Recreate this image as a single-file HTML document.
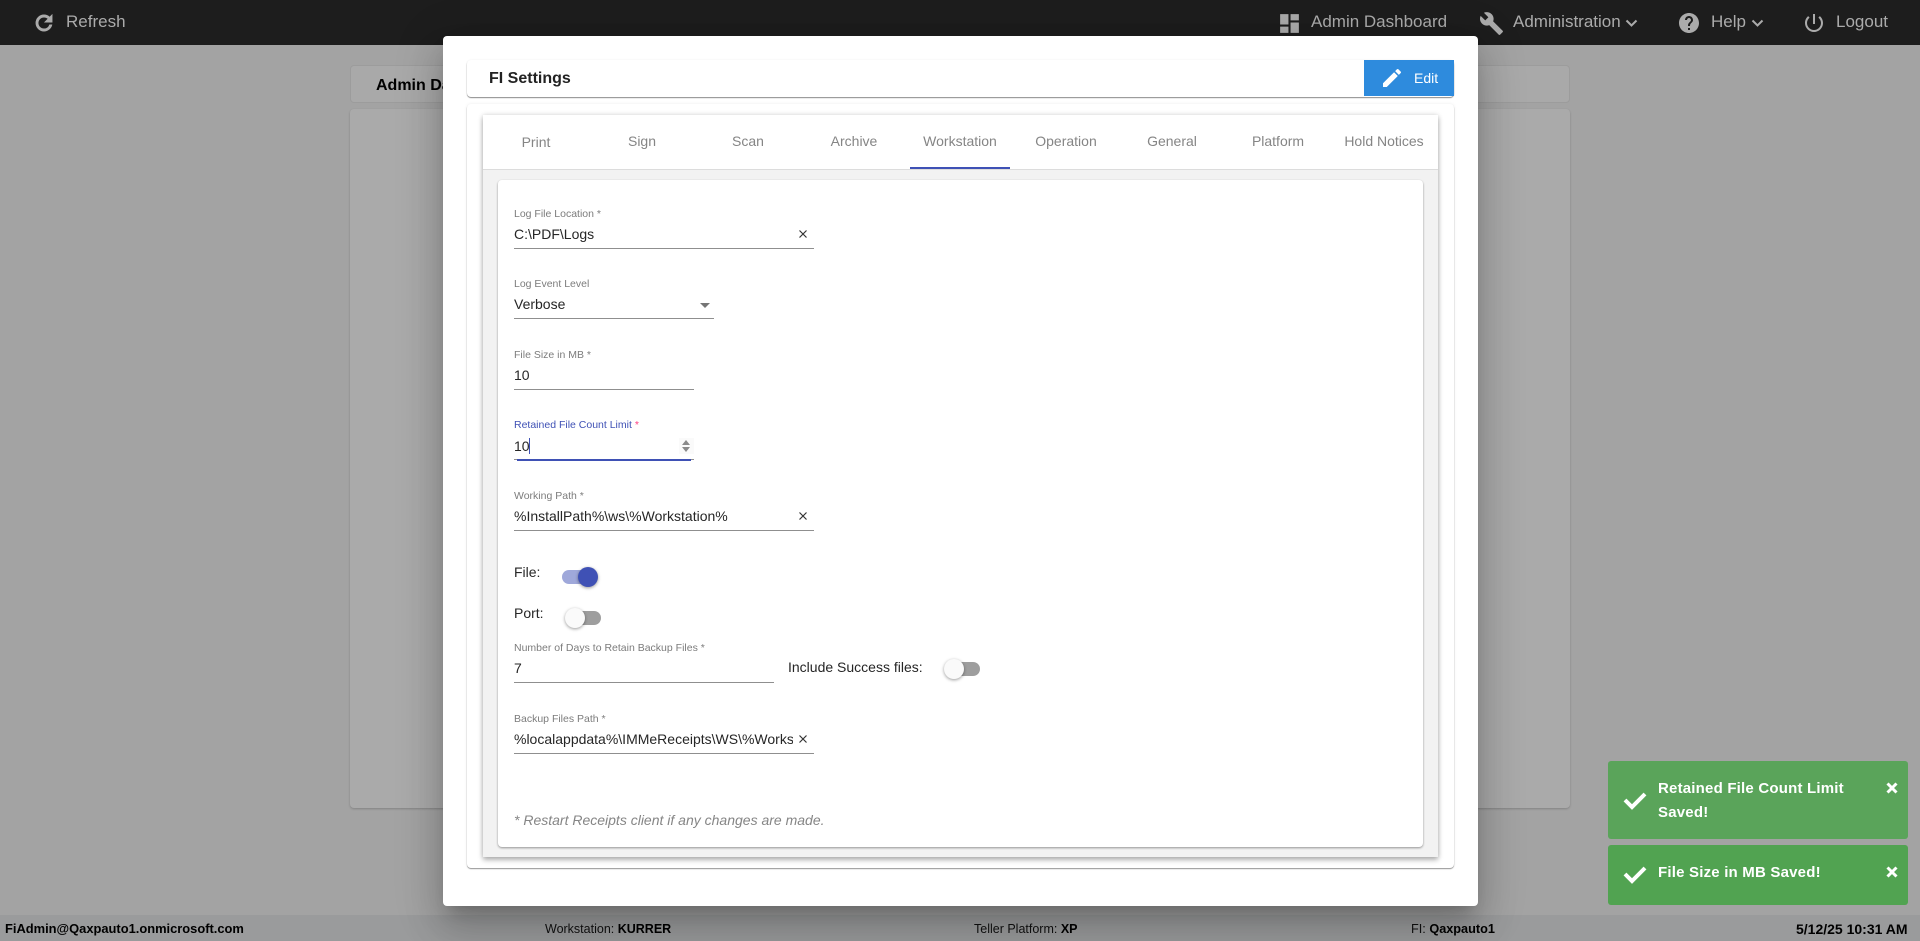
<!DOCTYPE html>
<html><head><meta charset="utf-8"><title>FI Settings</title>
<style>
html,body{margin:0;padding:0;width:1920px;height:941px;overflow:hidden;background:#a3a3a3;font-family:"Liberation Sans",Arial,sans-serif}
*{box-sizing:border-box}
.a{position:absolute}
.t{position:absolute;white-space:nowrap;height:20px;line-height:20px}
.top{color:#ababab;font-size:17px}
.tab{position:absolute;top:131px;width:106px;text-align:center;font-size:14px;line-height:20px;color:#858585}
.lab{font-size:10.5px;color:#7c7c7c;left:514px}
.val{font-size:14px;color:#262626;left:514px}
.ul{position:absolute;height:1px;background:#8f8f8f;left:514px}
.x{position:absolute;width:10px;height:10px}
.foot{font-size:12.5px;color:#111;top:919px}
.foot b{color:#000}
.toast{position:absolute;left:1608px;width:300px;border-radius:3px}
.tt{position:absolute;left:1658px;color:#fff;font-weight:bold;font-size:15px;line-height:24px;white-space:nowrap;letter-spacing:.2px}
</style></head><body>
<!-- page behind -->
<div class="a" style="left:0;top:0;width:1920px;height:45px;background:#1d1d1d"></div>
<div class="a" style="left:0;top:915px;width:1920px;height:26px;background:#9a9b9c"></div>
<div class="a" style="left:350px;top:65px;width:1220px;height:38px;background:#a9a9a9;border:1px solid #9c9c9c;border-radius:4px"></div>
<div class="t" style="left:376px;top:76px;font-size:16px;font-weight:bold;color:#000">Admin Dashboard</div>
<div class="a" style="left:350px;top:109px;width:1220px;height:699px;background:#aaa;border-radius:4px;box-shadow:0 1px 2px rgba(0,0,0,.2)"></div>

<!-- top bar -->
<svg class="a" style="left:32px;top:11px" width="24" height="24" viewBox="0 0 24 24" fill="#ababab" stroke="#ababab" stroke-width=".9"><path d="M17.65 6.35C16.2 4.9 14.21 4 12 4c-4.42 0-7.99 3.58-7.99 8s3.57 8 7.99 8c3.73 0 6.84-2.55 7.73-6h-2.08c-.82 2.33-3.04 4-5.65 4-3.31 0-6-2.69-6-6s2.69-6 6-6c1.66 0 3.14.69 4.22 1.78L13 11h7V4l-2.35 2.35z"/></svg>
<div class="t top" style="left:66px;top:12px">Refresh</div>
<svg class="a" style="left:1277px;top:11px" width="25" height="25" viewBox="0 0 24 24" fill="#ababab"><path d="M3 13h8V3H3v10zm0 8h8v-6H3v6zm10 0h8V11h-8v10zm0-18v6h8V3h-8z"/></svg>
<div class="t top" style="left:1311px;top:12px">Admin Dashboard</div>
<svg class="a" style="left:1479px;top:11px" width="25" height="25" viewBox="0 0 24 24" fill="#ababab"><path d="M22.7 19l-9.1-9.1c.9-2.3.4-5-1.5-6.9-2-2-5-2.4-7.4-1.3L9 6 6 9 1.6 4.7C.4 7.1.9 10.1 2.9 12.1c1.9 1.9 4.6 2.4 6.9 1.5l9.1 9.1c.4.4 1 .4 1.4 0l2.3-2.3c.5-.4.5-1.1.1-1.4z"/></svg>
<div class="t top" style="left:1513px;top:12px">Administration</div>
<svg class="a" style="left:1625px;top:18px" width="13" height="10" viewBox="0 0 13 10" fill="none" stroke="#ababab" stroke-width="2"><path d="M1.5 2.5L6.5 7.5L11.5 2.5"/></svg>
<svg class="a" style="left:1677px;top:11px" width="24" height="24" viewBox="0 0 24 24" fill="#ababab"><path d="M12 2C6.48 2 2 6.48 2 12s4.48 10 10 10 10-4.48 10-10S17.52 2 12 2zm1 17h-2v-2h2v2zm2.07-7.75l-.9.92C13.45 12.9 13 13.5 13 15h-2v-.5c0-1.1.45-2.1 1.17-2.83l1.24-1.26c.37-.36.59-.86.59-1.41 0-1.1-.9-2-2-2s-2 .9-2 2H8c0-2.21 1.79-4 4-4s4 1.79 4 4c0 .88-.36 1.68-.93 2.25z"/></svg>
<div class="t top" style="left:1711px;top:12px">Help</div>
<svg class="a" style="left:1751px;top:18px" width="13" height="10" viewBox="0 0 13 10" fill="none" stroke="#ababab" stroke-width="2"><path d="M1.5 2.5L6.5 7.5L11.5 2.5"/></svg>
<svg class="a" style="left:1802px;top:11px" width="24" height="24" viewBox="0 0 24 24" fill="#ababab"><path d="M13 3h-2v10h2V3zm4.83 2.17l-1.42 1.42C17.99 7.86 19 9.81 19 12c0 3.87-3.13 7-7 7s-7-3.13-7-7c0-2.19 1.01-4.14 2.58-5.42L6.17 5.17C4.23 6.82 3 9.26 3 12c0 4.97 4.03 9 9 9s9-4.03 9-9c0-2.74-1.23-5.18-3.17-6.83z"/></svg>
<div class="t top" style="left:1836px;top:12px">Logout</div>

<!-- footer -->
<div class="t foot" style="left:5px;font-size:12.9px;font-weight:bold;color:#000">FiAdmin@Qaxpauto1.onmicrosoft.com</div>
<div class="t foot" style="left:545px">Workstation: <b>KURRER</b></div>
<div class="t foot" style="left:974px">Teller Platform: <b>XP</b></div>
<div class="t foot" style="left:1411px;font-size:12.7px">FI: <b>Qaxpauto1</b></div>
<div class="t foot" style="left:1796px;font-size:14px;font-weight:bold;color:#000">5/12/25 10:31 AM</div>

<!-- modal -->
<div class="a" style="left:443px;top:36px;width:1035px;height:870px;background:#fff;border-radius:4px;box-shadow:0 11px 15px -7px rgba(0,0,0,.2),0 24px 38px 3px rgba(0,0,0,.14),0 9px 46px 8px rgba(0,0,0,.12)"></div>
<div class="a" style="left:467px;top:60px;width:987px;height:37px;background:#fff;border-radius:4px;box-shadow:0 1px 1px rgba(0,0,0,.45),0 0 2px rgba(0,0,0,.06)"></div>
<div class="t" style="left:489px;top:69px;font-size:16px;font-weight:bold;color:#222">FI Settings</div>
<div class="a" style="left:1364px;top:60px;width:90px;height:36px;background:#2e8bdd"></div>
<svg class="a" style="left:1380px;top:66px" width="24" height="24" viewBox="0 0 24 24" fill="#fff"><path d="M3 17.25V21h3.75L17.81 9.94l-3.75-3.75L3 17.25zM20.71 7.04c.39-.39.39-1.02 0-1.41l-2.34-2.34c-.39-.39-1.02-.39-1.41 0l-1.83 1.83 3.75 3.75 1.83-1.83z"/></svg>
<div class="t" style="left:1414px;top:68px;font-size:14px;color:#fff">Edit</div>

<div class="a" style="left:467px;top:104px;width:987px;height:764px;background:#fff;border-radius:4px;box-shadow:0 1px 1px rgba(0,0,0,.4),0 0 3px rgba(0,0,0,.08)"></div>
<div class="a" style="left:483px;top:115px;width:955px;height:742px;background:#f2f2f2;box-shadow:0 3px 5px rgba(0,0,0,.28),0 0 5px rgba(0,0,0,.15)"></div>
<div class="a" style="left:483px;top:115px;width:955px;height:55px;background:#fff;border-bottom:1px solid #dcdcdc"></div>
<div class="tab" style="left:483px;top:132px">Print</div>
<div class="tab" style="left:589px">Sign</div>
<div class="tab" style="left:695px">Scan</div>
<div class="tab" style="left:801px">Archive</div>
<div class="tab" style="left:907px">Workstation</div>
<div class="tab" style="left:1013px">Operation</div>
<div class="tab" style="left:1119px">General</div>
<div class="tab" style="left:1225px">Platform</div>
<div class="tab" style="left:1331px">Hold Notices</div>
<div class="a" style="left:910px;top:167px;width:100px;height:2px;background:#3f51b5"></div>

<div class="a" style="left:498px;top:180px;width:925px;height:667px;background:#fff;border-radius:4px;box-shadow:0 1px 2px rgba(0,0,0,.4)"></div>

<!-- fields -->
<div class="t lab" style="top:204px">Log File Location *</div>
<div class="t val" style="top:224px">C:\PDF\Logs</div>
<svg class="x" style="left:798px;top:229px" viewBox="0 0 10 10" stroke="#333" stroke-width="1.2"><path d="M1.5 1.5L8.5 8.5M8.5 1.5L1.5 8.5"/></svg>
<div class="ul" style="top:248px;width:300px"></div>

<div class="t lab" style="top:274px">Log Event Level</div>
<div class="t val" style="top:294px">Verbose</div>
<div class="a" style="left:700px;top:303px;width:0;height:0;border-left:5px solid transparent;border-right:5px solid transparent;border-top:5px solid #757575"></div>
<div class="ul" style="top:318px;width:200px"></div>

<div class="t lab" style="top:345px">File Size in MB *</div>
<div class="t val" style="top:365px">10</div>
<div class="ul" style="top:389px;width:180px"></div>

<div class="t lab" style="top:415px;color:#3f51b5">Retained File Count Limit <span style="color:#ff4081">*</span></div>
<div class="t val" style="top:436px">10</div>
<div class="a" style="left:529px;top:438px;width:1px;height:16px;background:#3f51b5"></div>
<div class="a" style="left:679px;top:438px;width:15px;height:16px;background:#fafafa"></div>
<div class="a" style="left:682px;top:440px;width:0;height:0;border-left:4.5px solid transparent;border-right:4.5px solid transparent;border-bottom:5px solid #8a8a8a"></div>
<div class="a" style="left:682px;top:447px;width:0;height:0;border-left:4.5px solid transparent;border-right:4.5px solid transparent;border-top:5px solid #8a8a8a"></div>
<div class="ul" style="top:459px;width:180px"></div>
<div class="a" style="left:517px;top:459px;width:174px;height:2px;background:#3f51b5"></div>

<div class="t lab" style="top:486px">Working Path *</div>
<div class="t val" style="top:506px">%InstallPath%\ws\%Workstation%</div>
<svg class="x" style="left:798px;top:511px" viewBox="0 0 10 10" stroke="#333" stroke-width="1.2"><path d="M1.5 1.5L8.5 8.5M8.5 1.5L1.5 8.5"/></svg>
<div class="ul" style="top:530px;width:300px"></div>

<div class="t val" style="top:562px">File:</div>
<div class="a" style="left:562px;top:570px;width:34px;height:14px;border-radius:7px;background:#9fa8da"></div>
<div class="a" style="left:578px;top:567px;width:20px;height:20px;border-radius:50%;background:#3f51b5;box-shadow:0 1px 3px rgba(0,0,0,.4)"></div>

<div class="t val" style="top:603px">Port:</div>
<div class="a" style="left:567px;top:611px;width:34px;height:14px;border-radius:7px;background:#9e9e9e"></div>
<div class="a" style="left:565px;top:608px;width:20px;height:20px;border-radius:50%;background:#fafafa;box-shadow:0 1px 3px rgba(0,0,0,.4)"></div>

<div class="t lab" style="top:638px">Number of Days to Retain Backup Files *</div>
<div class="t val" style="top:658px">7</div>
<div class="ul" style="top:682px;width:260px"></div>
<div class="t val" style="top:657px;left:788px">Include Success files:</div>
<div class="a" style="left:946px;top:662px;width:34px;height:14px;border-radius:7px;background:#9e9e9e"></div>
<div class="a" style="left:944px;top:659px;width:20px;height:20px;border-radius:50%;background:#fafafa;box-shadow:0 1px 3px rgba(0,0,0,.4)"></div>

<div class="t lab" style="top:709px">Backup Files Path *</div>
<div class="t val" style="top:729px;width:279px;overflow:hidden">%localappdata%\IMMeReceipts\WS\%Workstation%</div>
<svg class="x" style="left:798px;top:734px" viewBox="0 0 10 10" stroke="#333" stroke-width="1.2"><path d="M1.5 1.5L8.5 8.5M8.5 1.5L1.5 8.5"/></svg>
<div class="ul" style="top:753px;width:300px"></div>

<div class="t" style="left:514px;top:810px;font-size:14px;font-style:italic;color:#858585">* Restart Receipts client if any changes are made.</div>

<!-- toasts -->
<div class="toast" style="top:761px;height:78px;background:#5aa45a"></div>
<div class="tt" style="top:777px">Retained File Count Limit<br>Saved!</div>
<svg class="a" style="left:1622px;top:789px" width="26" height="22" viewBox="0 0 26 22" fill="none" stroke="#fff" stroke-width="4"><path d="M3 11L10 18L23 5"/></svg>
<svg class="a" style="left:1886px;top:782px" width="12" height="12" viewBox="0 0 12 12" stroke="#fff" stroke-width="3"><path d="M1.5 1.5L10.5 10.5M10.5 1.5L1.5 10.5"/></svg>
<div class="toast" style="top:845px;height:60px;background:#51a351"></div>
<div class="tt" style="top:861px">File Size in MB Saved!</div>
<svg class="a" style="left:1622px;top:863px" width="26" height="22" viewBox="0 0 26 22" fill="none" stroke="#fff" stroke-width="4"><path d="M3 11L10 18L23 5"/></svg>
<svg class="a" style="left:1886px;top:866px" width="12" height="12" viewBox="0 0 12 12" stroke="#fff" stroke-width="3"><path d="M1.5 1.5L10.5 10.5M10.5 1.5L1.5 10.5"/></svg>
</body></html>
